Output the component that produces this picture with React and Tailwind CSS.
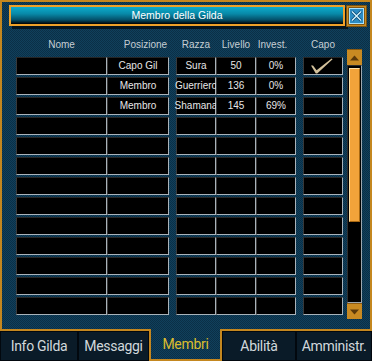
const ROWS = [
  { pos: 'Capo Gil', razza: 'Sura', liv: '50', inv: '0%', capo: true },
  { pos: 'Membro', razza: 'Guerriero', liv: '136', inv: '0%' },
  { pos: 'Membro', razza: 'Shamana', liv: '145', inv: '69%' },
  {}, {}, {}, {}, {}, {}, {}, {}, {}, {},
]

const TABS = [
  { label: 'Info Gilda', w: 'w-[78px]' },
  { label: 'Messaggi', w: 'w-[71px]' },
  { label: 'Membri', w: 'w-[73px]', active: true },
  { label: 'Abilità', w: 'w-[74px]' },
  { label: 'Amministr.', w: 'flex-1' },
]

const PATTERN = 'bg-[#0e3650] bg-[repeating-conic-gradient(#10405c_0_25%,#0b2f46_0_50%)] bg-[length:2px_2px]'

function Cell({ w, children }) {
  return (
    <div
      className={`${w} h-[18px] shrink-0 bg-black border border-t-[#262626] border-l-[#383838] border-r-[#a9b3ba] border-b-[#a9b3ba] flex items-center justify-center whitespace-nowrap text-[#e6e6e6] overflow-visible`}
    >
      {children}
    </div>
  )
}

function Check() {
  return (
    <svg width="38" height="16" viewBox="0 0 38 16">
      <path d="M7 7.5 L9 7.5 L12.6 12.2 L27.6 0.6 L28.6 1.2 L13.2 15.6 L11.8 15.6 Z" fill="#d4c29c" />
    </svg>
  )
}

function CloseButton() {
  return (
    <svg width="21" height="22" viewBox="0 0 21 22" className="shrink-0">
      <rect x="0" y="0" width="21" height="22" fill="#c98b22" />
      <rect x="0.5" y="0.5" width="20" height="21" fill="none" stroke="#7a5210" />
      <rect x="2.5" y="2.5" width="16" height="17" fill="#3b2406" />
      <rect x="3.5" y="3.5" width="14" height="15" fill="#2c8cc4" stroke="#a6e2ff" />
      <path d="M6 6.5 L15 15.5 M15 6.5 L6 15.5" stroke="#0d4c78" strokeWidth="3" />
      <path d="M6 6.5 L15 15.5 M15 6.5 L6 15.5" stroke="#d6f4ff" strokeWidth="1.3" />
    </svg>
  )
}

function ScrollButton({ up }) {
  return (
    <div className="h-[16px] bg-[#c88a22] border-t border-[#8a5a12] flex items-center justify-center">
      <svg width="9" height="6" viewBox="0 0 9 6">
        <path d={up ? 'M0 5.5 L9 5.5 L4.5 0.5 Z' : 'M0 0.5 L9 0.5 L4.5 5.5 Z'} fill="#5c3a0a" />
      </svg>
    </div>
  )
}

export default function App() {
  return (
    <div className="w-[372px] h-[361px] flex flex-col bg-[#061420] font-['Liberation_Sans',Arial,sans-serif] text-[10px] leading-none">
      <div className={`h-[331px] shrink-0 border-2 border-[#c4871f] ${PATTERN} flex flex-col pl-[7px] pt-[3px]`}>
        {/* title bar */}
        <div className="flex items-start">
          <div className="w-[336px] h-[21px] border-2 border-[#eea028] bg-[linear-gradient(#0cabcb,#0889a8_40%,#04506a_75%,#000)] shadow-[3px_3px_0_#04141e] flex items-center justify-center text-white text-[10.5px]">
            Membro della Gilda
          </div>
          <div className="ml-[1px]">
            <CloseButton />
          </div>
        </div>

        {/* body */}
        <div className="flex items-start ml-[7px] mt-[11px]">
          <div className="flex flex-col">
            <div className="flex h-[14px] items-center text-[#c6ced4]">
              <div className="w-[91px] text-center">Nome</div>
              <div className="w-[62px] text-center pl-[15px]">Posizione</div>
              <div className="w-[40px] ml-[7px] text-center">Razza</div>
              <div className="w-[40px] text-center">Livello</div>
              <div className="w-[40px] text-center pr-[7px]">Invest.</div>
              <div className="w-[40px] ml-[7px] text-center">Capo</div>
            </div>
            <div className="flex flex-col gap-[2px] mt-[5px]">
              {ROWS.map((r, i) => (
                <div key={i} className="flex">
                  <Cell w="w-[91px]" />
                  <Cell w="w-[62px]">{r.pos}</Cell>
                  <div className="w-[7px] shrink-0" />
                  <Cell w="w-[40px]">{r.razza}</Cell>
                  <Cell w="w-[40px]">{r.liv}</Cell>
                  <Cell w="w-[40px]">{r.inv}</Cell>
                  <div className="w-[7px] shrink-0" />
                  <Cell w="w-[40px]">{r.capo && <Check />}</Cell>
                </div>
              ))}
            </div>
          </div>

          {/* scrollbar */}
          <div className="w-[15px] ml-[4px] mt-[11px] flex flex-col">
            <ScrollButton up />
            <div className="h-[238px] bg-black border border-l-[#2e2e2e] border-t-[#2e2e2e] border-r-[#9ea8b0] border-b-[#9ea8b0] pl-[1px] pt-[2px]">
              <div className="w-[11px] h-[154px] bg-[#f2a33a] border border-l-[#ffe2a8] border-t-[#ffe2a8] border-r-[#a86812] border-b-[#a86812]" />
            </div>
            <ScrollButton />
          </div>
        </div>
      </div>

      {/* tabs */}
      <div className="flex h-[30px] font-['Roboto',sans-serif] text-[14px] tracking-[-0.3px]">
        {TABS.map((t) =>
          t.active ? (
            <div
              key={t.label}
              className={`${t.w} -mt-[2px] h-[32px] border-x-2 border-b-2 border-[#c4871f] ${PATTERN} flex items-center justify-center text-[#dcbd2e]`}
            >
              {t.label}
            </div>
          ) : (
            <div
              key={t.label}
              className={`${t.w} h-[30px] bg-[#0a1b28] border border-[#02080e] flex items-center justify-center text-[#d2d8dc]`}
            >
              {t.label}
            </div>
          )
        )}
      </div>
    </div>
  )
}
